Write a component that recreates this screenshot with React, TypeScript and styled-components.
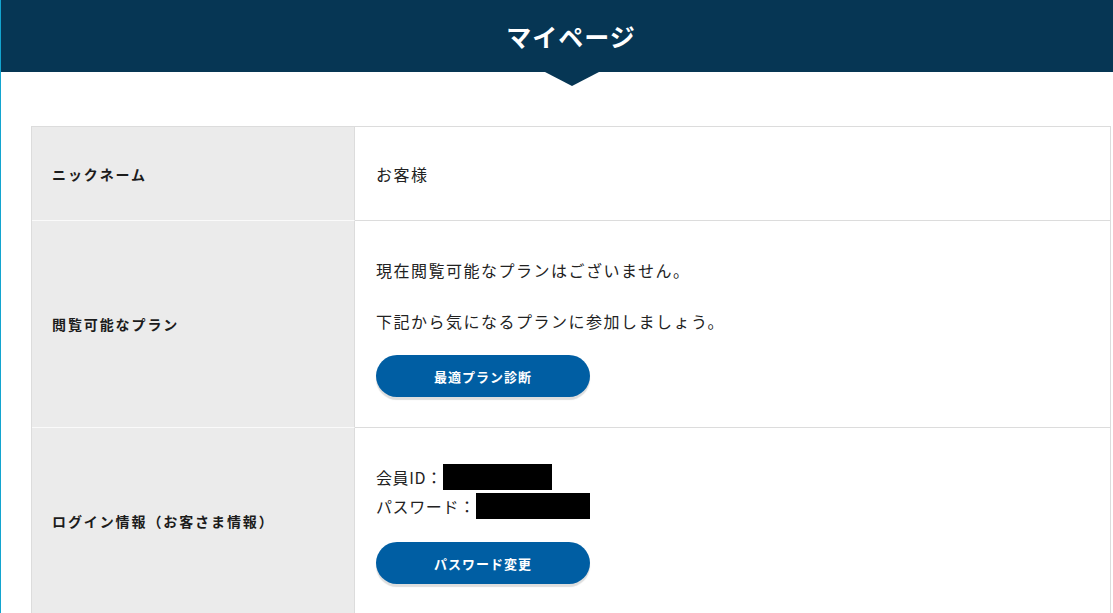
import React from "react";
import styled, { createGlobalStyle } from "styled-components";

const Global = createGlobalStyle`
  html, body { margin: 0; padding: 0; background: #fff; }
  body {
    font-family: "Noto Sans CJK JP", "Noto Sans", sans-serif;
    color: #222;
    overflow: hidden;
  }
`;

const Page = styled.div`
  border-left: 1px solid #13a4cf;
  min-height: 613px;
  box-sizing: border-box;
`;

const Header = styled.header`
  position: relative;
  height: 72px;
  background: #063654;
  display: flex;
  align-items: center;
  justify-content: center;
  padding: 0 2px 0 30px;
  &::after {
    content: "";
    position: absolute;
    left: calc(50% + 15px);
    transform: translateX(-50%);
    top: 72px;
    border-left: 27px solid transparent;
    border-right: 27px solid transparent;
    border-top: 14px solid #063654;
  }
`;

const Title = styled.h1`
  margin: 0;
  color: #fff;
  font-size: 25px;
  font-weight: 700;
  letter-spacing: 1px;
`;

const Main = styled.main`
  padding: 54px 2px 0 30px;
`;

const Table = styled.div`
  border: 1px solid #dcdcdc;
  border-bottom: none;
  display: grid;
  grid-template-columns: 323px 1fr;
`;

const Label = styled.div<{ $last?: boolean }>`
  background: #ebebeb;
  border-right: 1px solid #dcdcdc;
  border-bottom: ${(p) => (p.$last ? "none" : "1px solid #fafafa")};
  display: flex;
  align-items: center;
  padding: 0 20px;
  font-size: 14px;
  letter-spacing: 1.9px;
  font-weight: 700;
  color: #1c1c1c;
`;

const Value = styled.div<{ $pt: number; $last?: boolean }>`
  border-bottom: ${(p) => (p.$last ? "none" : "1px solid #dcdcdc")};
  padding: ${(p) => p.$pt}px 21px 30px;
  font-size: 16px;
  letter-spacing: 1.5px;
  box-sizing: border-box;
`;

const NameValue = styled.div`
  height: 93px;
  border-bottom: 1px solid #dcdcdc;
  display: flex;
  align-items: center;
  padding: 0 21px;
  font-size: 16px;
  letter-spacing: 1.5px;
`;

const Text = styled.p<{ $mb: number }>`
  margin: 0 0 ${(p) => p.$mb}px;
  line-height: 28px;
`;

const InfoLine = styled.div`
  line-height: 30px;
  height: 29px;
  display: flex;
  align-items: center;
  letter-spacing: 0.6px;
`;

const Mask = styled.span<{ $w: number }>`
  display: inline-block;
  width: ${(p) => p.$w}px;
  height: 26px;
  background: #000;
`;

const Spacer = styled.div`
  height: 22px;
`;

const Button = styled.button`
  display: flex;
  align-items: center;
  justify-content: center;
  width: 214px;
  height: 42px;
  border: none;
  border-radius: 21px;
  background: #005ea3;
  color: #fff;
  font-family: inherit;
  font-size: 13px;
  letter-spacing: 1px;
  font-weight: 700;
  box-shadow: 0 3px 1px #dedede;
  cursor: pointer;
`;

export default function App() {
  return (
    <Page>
      <Global />
      <Header>
        <Title>マイページ</Title>
      </Header>
      <Main>
        <Table>
          <Label>ニックネーム</Label>
          <NameValue>お客様</NameValue>

          <Label>閲覧可能なプラン</Label>
          <Value $pt={35}>
            <Text $mb={23}>現在閲覧可能なプランはございません。</Text>
            <Text $mb={20}>下記から気になるプランに参加しましょう。</Text>
            <Button>最適プラン診断</Button>
          </Value>

          <Label $last>ログイン情報（お客さま情報）</Label>
          <Value $pt={34} $last>
            <InfoLine>
              会員ID：<Mask $w={109} />
            </InfoLine>
            <InfoLine>
              パスワード：<Mask $w={114} />
            </InfoLine>
            <Spacer />
            <Button>パスワード変更</Button>
          </Value>
        </Table>
      </Main>
    </Page>
  );
}
